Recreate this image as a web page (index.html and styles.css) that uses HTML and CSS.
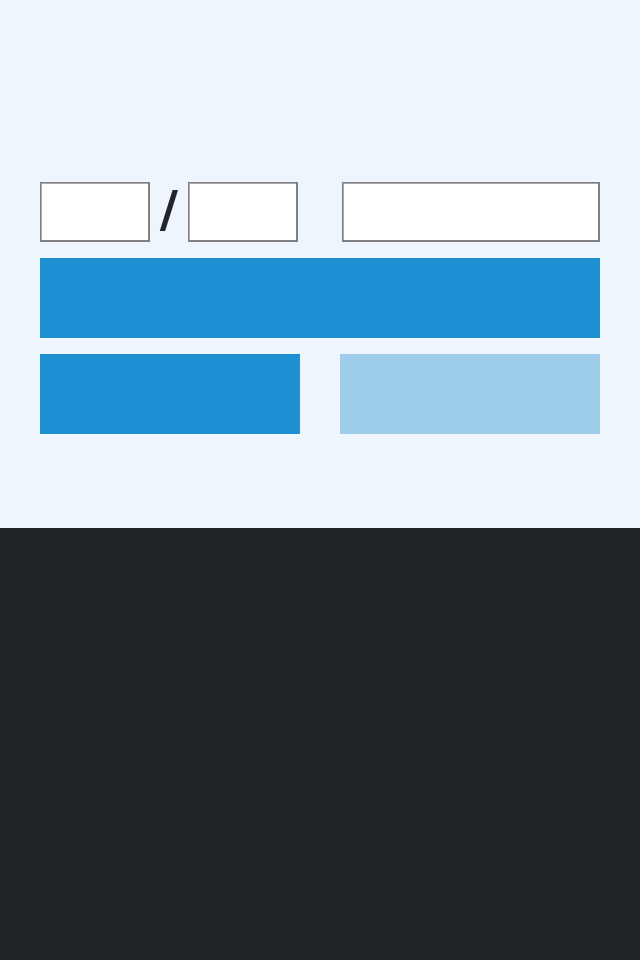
FILE: index.html
```html
<!DOCTYPE html>
<html lang="en">
<head>
    <meta charset="UTF-8">
    <meta name="viewport" content="width=device-width, initial-scale=1.0">
    <title>Fraction</title>
    <link rel="stylesheet" href="styles.css">
</head>
<body>
    <main class="panel">
        <div class="entry-row">
            <div class="fraction">
                <input type="text" class="num-input" id="numerator">
                <span class="slash">/</span>
                <input type="text" class="num-input" id="denominator">
            </div>
            <input type="text" class="result-input" id="result">
        </div>

        <button class="action-btn" id="convertBtn"></button>

        <div class="btn-row">
            <button class="action-btn" id="checkBtn"></button>
            <button class="action-btn" id="nextBtn" disabled></button>
        </div>
    </main>

    <footer class="bottom"></footer>
</body>
</html>
```

FILE: styles.css
```css
* {
    margin: 0;
    padding: 0;
    box-sizing: border-box;
}

html, body {
    height: 100%;
}

body {
    font-family: 'DejaVu Sans', sans-serif;
    background: #1f2427;
    display: flex;
    flex-direction: column;
}

.panel {
    background: #eff5fc;
    padding: 182px 40px 94px;
    display: flex;
    flex-direction: column;
    gap: 16px;
}

.entry-row {
    display: grid;
    grid-template-columns: 258px 258px;
    justify-content: space-between;
    height: 60px;
}

.fraction {
    display: flex;
    align-items: center;
}

.num-input,
.result-input {
    height: 60px;
    border-style: solid;
    border-color: #808080;
    border-width: 1px 2px 2px 1px;
    box-shadow: inset 1px 1px 0 #a9a9a9;
    background: #ffffff;
    font-size: 24px;
    outline: none;
}

.num-input {
    width: 110px;
}

.result-input {
    width: 258px;
}

.slash {
    width: 38px;
    margin-bottom: 6px;
    text-align: center;
    font-size: 50px;
    font-weight: bold;
    color: #212529;
    line-height: 1;
}

.action-btn {
    height: 80px;
    width: 100%;
    border: none;
    background: #1e90d4;
    cursor: pointer;
}

.action-btn:disabled {
    background: #9dcdea;
    cursor: not-allowed;
}

.btn-row {
    display: grid;
    grid-template-columns: 1fr 1fr;
    gap: 40px;
}

.bottom {
    flex: 1;
}
```
